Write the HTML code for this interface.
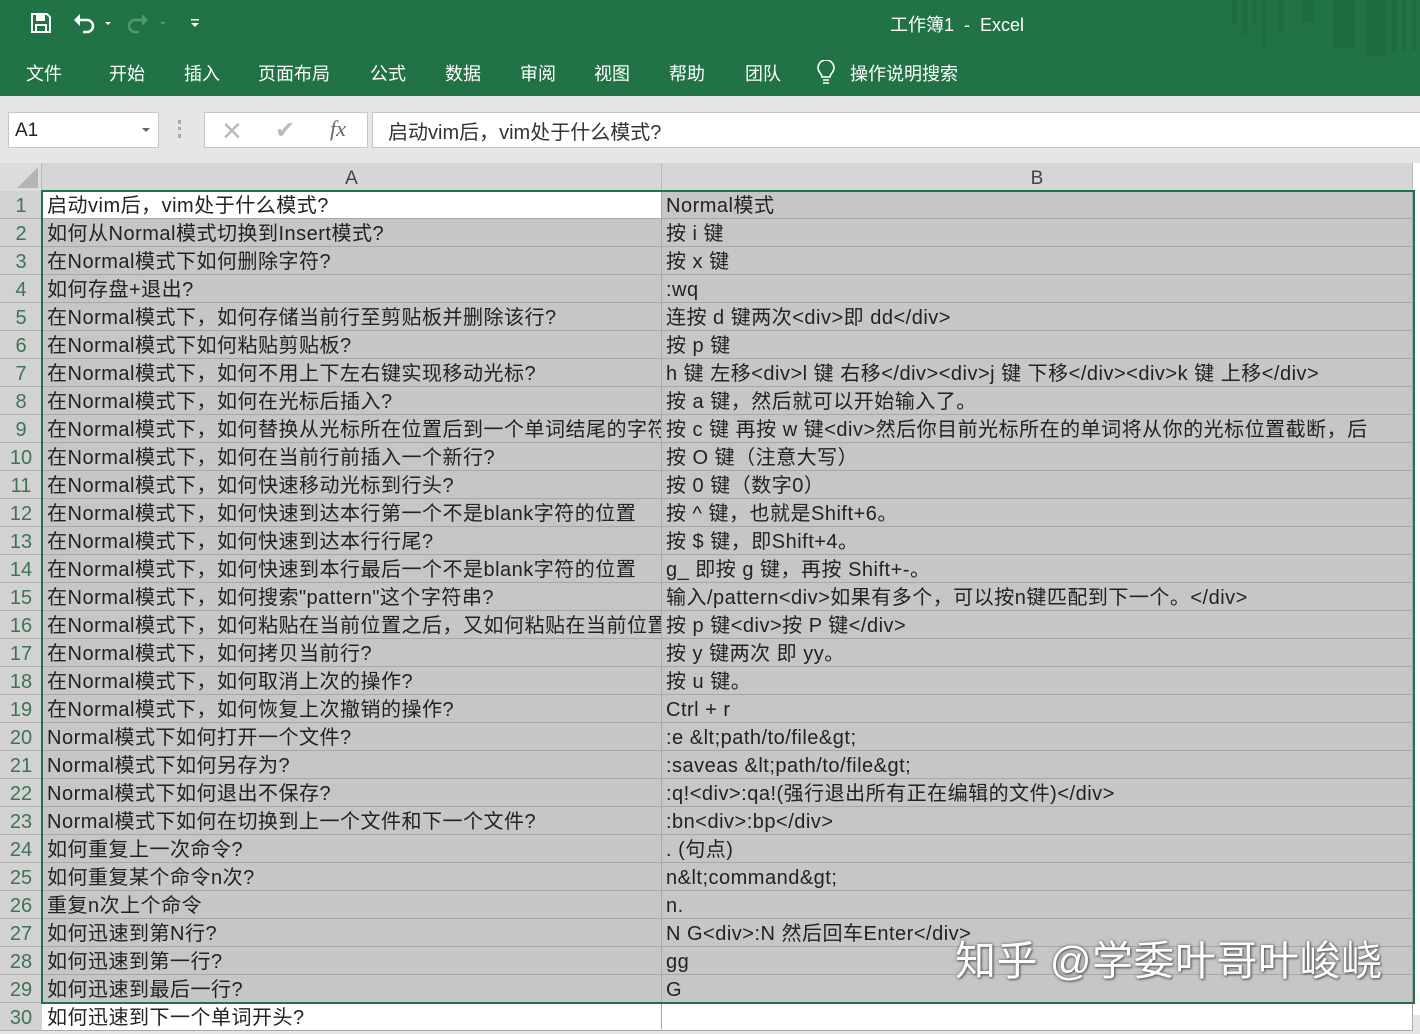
<!DOCTYPE html>
<html><head><meta charset="utf-8"><style>
*{margin:0;padding:0;box-sizing:border-box}
body{width:1420px;height:1015px;overflow:hidden;background:#e6e6e6;font-family:"Liberation Sans","Noto Sans CJK SC",sans-serif;position:relative}
.top{position:absolute;left:0;top:0;width:1420px;height:96px;background:#217346;color:#fff}
.menu{position:absolute;top:60px;font-size:18px;color:#fff}
.title{position:absolute;left:890px;top:11px;font-size:18px}
.nb{position:absolute;left:8px;top:112px;width:151px;height:36px;background:#fff;border:1px solid #c6c6c6;font-size:19px;padding:7px 6px;color:#222}
.fx{position:absolute;left:204px;top:112px;width:164px;height:36px;background:#fff;border:1px solid #c6c6c6}
.fi{position:absolute;left:372px;top:112px;width:1060px;height:36px;background:#fff;border:1px solid #c6c6c6;font-size:20px;padding:3px 15px;color:#333}
.grid{position:absolute;left:0;top:163px;width:1420px;height:852px;background:#fff}
.ch{position:absolute;top:0;height:28px;background:#d6d6d6;border-right:1px solid #b8b8b8;text-align:center;font-size:19px;color:#444;line-height:32px}
.r{position:absolute;left:0;width:1413px;height:28px;font-size:20px;line-height:31px;color:#222;letter-spacing:0.5px}
.rn{position:absolute;left:0;width:42px;height:28px;background:#d2d2d2;border-bottom:1px solid #b0b0b0;text-align:center;color:#3f7355;font-size:20px;letter-spacing:0}
.a,.b{position:absolute;top:0;height:28px;background:#c6c6c6;border-bottom:1px solid #a8a8a8;border-right:1px solid #a8a8a8;white-space:nowrap;overflow:hidden;padding-left:5px}
.a{left:42px;width:620px}
.b{left:662px;width:751px;padding-left:4px}
.wm{position:absolute;left:955px;top:927px;font-size:41px;letter-spacing:0.5px;color:#fff;text-shadow:0 0 3px #666,1px 1px 2px #555;white-space:nowrap}
</style></head><body>
<div class="top">
<svg style="position:absolute;left:30px;top:12px" width="22" height="22" viewBox="0 0 22 22"><path d="M2 2h15l3 3v15H2z" fill="none" stroke="#fff" stroke-width="2"/><rect x="6" y="3" width="9" height="6" fill="#fff"/><rect x="6" y="13" width="10" height="7" fill="none" stroke="#fff" stroke-width="2"/></svg>
<svg style="position:absolute;left:72px;top:12px" width="40" height="24" viewBox="0 0 40 24"><path d="M6 8h9a6 6 0 0 1 0 12h-4" fill="none" stroke="#fff" stroke-width="2.5"/><path d="M2 8l6-6v12z" fill="#fff"/><path d="M33 10l3 3 3-3z" fill="#fff"/></svg>
<svg style="position:absolute;left:126px;top:12px" width="44" height="24" viewBox="0 0 44 24"><path d="M18 8H9a6 6 0 0 0 0 12h4" fill="none" stroke="#4e9a6e" stroke-width="2.5"/><path d="M22 8l-6-6v12z" fill="#4e9a6e"/><path d="M34 10l3 3 3-3z" fill="#4e9a6e"/></svg>
<svg style="position:absolute;left:190px;top:18px" width="10" height="10"><rect x="1" y="1" width="8" height="1.5" fill="#fff"/><path d="M1 5h8l-4 4z" fill="#fff"/></svg>
<div class="title">工作簿1&nbsp; - &nbsp;Excel</div>
<svg style="position:absolute;left:1230px;top:0" width="190" height="58"><g fill="#1e6b40"><rect x="2" y="0" width="5" height="24"/><rect x="12" y="0" width="6" height="35"/><rect x="22" y="0" width="4" height="25"/><rect x="32" y="0" width="4" height="48"/><rect x="48" y="0" width="6" height="32"/><rect x="72" y="0" width="12" height="22"/><rect x="103" y="0" width="22" height="48"/><rect x="136" y="0" width="20" height="56"/><rect x="162" y="0" width="5" height="52"/><rect x="172" y="0" width="4" height="50"/><rect x="182" y="0" width="4" height="50"/></g></svg>
<div class="menu" style="left:26px">文件</div>
<div class="menu" style="left:109px">开始</div>
<div class="menu" style="left:184px">插入</div>
<div class="menu" style="left:258px">页面布局</div>
<div class="menu" style="left:370px">公式</div>
<div class="menu" style="left:445px">数据</div>
<div class="menu" style="left:520px">审阅</div>
<div class="menu" style="left:594px">视图</div>
<div class="menu" style="left:669px">帮助</div>
<div class="menu" style="left:745px">团队</div>
<svg style="position:absolute;left:816px;top:60px" width="20" height="26" viewBox="0 0 20 26"><path d="M6 17c0-3-4-5-4-9a8 8 0 0 1 16 0c0 4-4 6-4 9z" fill="none" stroke="#fff" stroke-width="1.6"/><path d="M7 20h6M7 23h6" stroke="#fff" stroke-width="1.6"/></svg>
<div class="menu" style="left:850px">操作说明搜索</div>
</div>
<div class="nb">A1<span style="position:absolute;right:8px;top:15px;border:4px solid transparent;border-top:4px solid #666"></span></div>
<div style="position:absolute;left:178px;top:120px;width:3px;height:18px;border-left:3px dotted #aaa"></div>
<div class="fx">
<span style="position:absolute;left:16px;top:3px;font-size:26px;color:#bbb">✕</span>
<span style="position:absolute;left:70px;top:3px;font-size:24px;color:#bbb">✔</span>
<span style="position:absolute;left:125px;top:3px;font-size:22px;color:#666;font-style:italic;font-family:'Liberation Serif',serif">fx</span>
</div>
<div class="fi">启动vim后，vim处于什么模式?</div>
<div class="grid">
<div class="ch" style="left:0;width:42px;background:#dcdcdc"><svg width="40" height="28" style="position:absolute;left:0;top:0"><path d="M38 4V25H17z" fill="#b4b4b4"/></svg></div>
<div class="ch" style="left:42px;width:620px">A</div>
<div class="ch" style="left:662px;width:751px">B</div>
<div style="position:absolute;left:1413px;top:0;width:7px;height:852px;background:#fff"></div>
</div>
<div id="rows" style="position:absolute;left:0;top:191px">
<div class="r" style="top:0"><div class="rn">1</div><div class="a" style="background:#fff">启动vim后，vim处于什么模式?</div><div class="b">Normal模式</div></div>
<div class="r" style="top:28px"><div class="rn">2</div><div class="a">如何从Normal模式切换到Insert模式?</div><div class="b">按 i 键</div></div>
<div class="r" style="top:56px"><div class="rn">3</div><div class="a">在Normal模式下如何删除字符?</div><div class="b">按 x 键</div></div>
<div class="r" style="top:84px"><div class="rn">4</div><div class="a">如何存盘+退出?</div><div class="b">:wq</div></div>
<div class="r" style="top:112px"><div class="rn">5</div><div class="a">在Normal模式下，如何存储当前行至剪贴板并删除该行?</div><div class="b">连按 d 键两次&lt;div&gt;即 dd&lt;/div&gt;</div></div>
<div class="r" style="top:140px"><div class="rn">6</div><div class="a">在Normal模式下如何粘贴剪贴板?</div><div class="b">按 p 键</div></div>
<div class="r" style="top:168px"><div class="rn">7</div><div class="a">在Normal模式下，如何不用上下左右键实现移动光标?</div><div class="b">h 键 左移&lt;div&gt;l 键 右移&lt;/div&gt;&lt;div&gt;j 键 下移&lt;/div&gt;&lt;div&gt;k 键 上移&lt;/div&gt;</div></div>
<div class="r" style="top:196px"><div class="rn">8</div><div class="a">在Normal模式下，如何在光标后插入?</div><div class="b">按 a 键，然后就可以开始输入了。</div></div>
<div class="r" style="top:224px"><div class="rn">9</div><div class="a">在Normal模式下，如何替换从光标所在位置后到一个单词结尾的字符</div><div class="b">按 c 键 再按 w 键&lt;div&gt;然后你目前光标所在的单词将从你的光标位置截断，后</div></div>
<div class="r" style="top:252px"><div class="rn">10</div><div class="a">在Normal模式下，如何在当前行前插入一个新行?</div><div class="b">按 O 键（注意大写）</div></div>
<div class="r" style="top:280px"><div class="rn">11</div><div class="a">在Normal模式下，如何快速移动光标到行头?</div><div class="b">按 0 键（数字0）</div></div>
<div class="r" style="top:308px"><div class="rn">12</div><div class="a">在Normal模式下，如何快速到达本行第一个不是blank字符的位置</div><div class="b">按 ^ 键，也就是Shift+6。</div></div>
<div class="r" style="top:336px"><div class="rn">13</div><div class="a">在Normal模式下，如何快速到达本行行尾?</div><div class="b">按 $ 键，即Shift+4。</div></div>
<div class="r" style="top:364px"><div class="rn">14</div><div class="a">在Normal模式下，如何快速到本行最后一个不是blank字符的位置</div><div class="b">g_ 即按 g 键，再按 Shift+-。</div></div>
<div class="r" style="top:392px"><div class="rn">15</div><div class="a">在Normal模式下，如何搜索"pattern"这个字符串?</div><div class="b">输入/pattern&lt;div&gt;如果有多个，可以按n键匹配到下一个。&lt;/div&gt;</div></div>
<div class="r" style="top:420px"><div class="rn">16</div><div class="a">在Normal模式下，如何粘贴在当前位置之后，又如何粘贴在当前位置</div><div class="b">按 p 键&lt;div&gt;按 P 键&lt;/div&gt;</div></div>
<div class="r" style="top:448px"><div class="rn">17</div><div class="a">在Normal模式下，如何拷贝当前行?</div><div class="b">按 y 键两次 即 yy。</div></div>
<div class="r" style="top:476px"><div class="rn">18</div><div class="a">在Normal模式下，如何取消上次的操作?</div><div class="b">按 u 键。</div></div>
<div class="r" style="top:504px"><div class="rn">19</div><div class="a">在Normal模式下，如何恢复上次撤销的操作?</div><div class="b">Ctrl + r</div></div>
<div class="r" style="top:532px"><div class="rn">20</div><div class="a">Normal模式下如何打开一个文件?</div><div class="b">:e &amp;lt;path/to/file&amp;gt;</div></div>
<div class="r" style="top:560px"><div class="rn">21</div><div class="a">Normal模式下如何另存为?</div><div class="b">:saveas &amp;lt;path/to/file&amp;gt;</div></div>
<div class="r" style="top:588px"><div class="rn">22</div><div class="a">Normal模式下如何退出不保存?</div><div class="b">:q!&lt;div&gt;:qa!(强行退出所有正在编辑的文件)&lt;/div&gt;</div></div>
<div class="r" style="top:616px"><div class="rn">23</div><div class="a">Normal模式下如何在切换到上一个文件和下一个文件?</div><div class="b">:bn&lt;div&gt;:bp&lt;/div&gt;</div></div>
<div class="r" style="top:644px"><div class="rn">24</div><div class="a">如何重复上一次命令?</div><div class="b">. (句点)</div></div>
<div class="r" style="top:672px"><div class="rn">25</div><div class="a">如何重复某个命令n次?</div><div class="b">n&amp;lt;command&amp;gt;</div></div>
<div class="r" style="top:700px"><div class="rn">26</div><div class="a">重复n次上个命令</div><div class="b">n.</div></div>
<div class="r" style="top:728px"><div class="rn">27</div><div class="a">如何迅速到第N行?</div><div class="b">N G&lt;div&gt;:N 然后回车Enter&lt;/div&gt;</div></div>
<div class="r" style="top:756px"><div class="rn">28</div><div class="a">如何迅速到第一行?</div><div class="b">gg</div></div>
<div class="r" style="top:784px"><div class="rn">29</div><div class="a">如何迅速到最后一行?</div><div class="b">G</div></div>
<div class="r" style="top:812px"><div class="rn">30</div><div class="a" style="background:#fff">如何迅速到下一个单词开头?</div><div class="b" style="background:#fff"></div></div>
</div>
<div style="position:absolute;left:41px;top:190px;width:1374px;height:814px;border:2px solid #217346;pointer-events:none"></div>
<div class="wm">知乎 @学委叶哥叶峻峣</div>
</body></html>
